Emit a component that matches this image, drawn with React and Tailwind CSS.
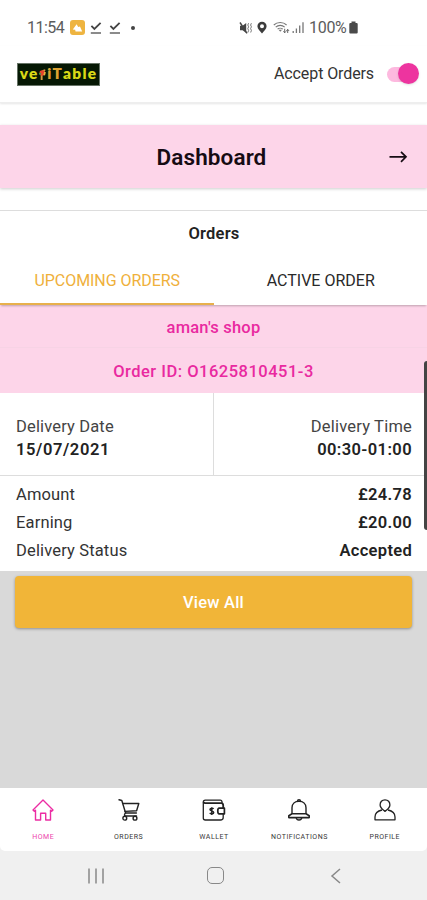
import React, { useState } from 'react'

const HomeIcon = () => (
  <svg width="24" height="24" viewBox="0 0 24 24" fill="none" stroke="currentColor" strokeWidth="1.4" strokeLinejoin="round">
    <path d="M12 2 L22 12 L20.7 13.3 L19.5 12.3 V22 H14.7 V15.2 H9.6 V22 H4.5 V12.3 L3.3 13.3 L2 12 Z" />
  </svg>
)

const CartIcon = () => (
  <svg width="24" height="24" viewBox="0 0 24 24" fill="none" stroke="currentColor" strokeWidth="1.4" strokeLinejoin="round" strokeLinecap="round">
    <path d="M2 1.8 L4.8 2.5 L8.6 15 H19.4" />
    <path d="M5.8 5.5 H21.8 L19.6 12.7 L8 13.4" />
    <path d="M8.6 15 C7.5 15.6 7 17.6 8.2 18 H19.5" />
    <circle cx="7.8" cy="20.2" r="1.9" />
    <circle cx="18" cy="20.2" r="1.9" />
  </svg>
)

const WalletIcon = () => (
  <svg width="24" height="24" viewBox="0 0 24 24" fill="none" stroke="currentColor" strokeWidth="1.3" strokeLinejoin="round">
    <path d="M20 5 V4 C20 2.8 19.3 2.2 18.3 2.2 H3.3 C1.8 2.2 1.3 3 1.3 4 V20 C1.3 21.3 2 22 3.3 22 H18.5 C20.3 22 21.2 21 21.2 19.5 V16" />
    <path d="M1.5 4.1 C1.8 5 2.4 5.2 3.3 5.2 H19 C20.5 5.2 21.2 6 21.2 7.5 V10" strokeWidth="1.8" />
    <path d="M22.4 10.2 H17.2 C15.3 10.2 15.3 15.8 17.2 15.8 H22.4 Z" strokeWidth="1.7" />
    <path d="M11.6 10.9 C10.8 9.8 8 9.9 8 11.5 C8 13.2 11.7 12.5 11.7 14.4 C11.7 16.2 8.6 16.1 7.8 14.9 M9.8 9.2 V17" strokeWidth="1.5" />
  </svg>
)

const BellIcon = () => (
  <svg width="24" height="24" viewBox="0 0 24 24" fill="none" stroke="currentColor" strokeWidth="1.4" strokeLinejoin="round">
    <path d="M5 15.8 V9.8 C5 5.7 8 3.2 12 3.2 C16 3.2 19 5.7 19 9.8 V15.8" />
    <path d="M10.5 3.2 C10.5 1.3 13.5 1.3 13.5 3.2" />
    <path d="M5 15.8 H19 L22.2 17.7 V19.6 H1.8 V17.7 Z" strokeWidth="1.6" />
    <path d="M9.3 20 C9.7 22.6 14.3 22.6 14.7 20" />
  </svg>
)

const ProfileIcon = () => (
  <svg width="24" height="24" viewBox="0 0 24 24" fill="none" stroke="currentColor" strokeWidth="1.3" strokeLinejoin="round">
    <path d="M12 1.8 C8.9 1.8 7.1 4 7.1 7 C7.1 9.8 9.5 11.3 12 13.4 C14.5 11.3 16.9 9.8 16.9 7 C16.9 4 15.1 1.8 12 1.8 Z" />
    <path d="M9 12 C4.4 13 2 15.5 2 19 V21.8 H22 V19 C22 15.5 19.6 13 15 12" />
  </svg>
)

const CheckIcon = () => (
  <svg width="14" height="14" viewBox="0 0 14 14" fill="none" stroke="#444" strokeWidth="1.8">
    <path d="M2.4 4.9 L5.4 7.9 L11.6 1.9" />
    <path d="M1.8 12 H12" stroke="#777" strokeWidth="1.7" />
  </svg>
)

const MuteIcon = () => (
  <svg width="14" height="14" viewBox="0 0 14 14" fill="none" stroke="#444" strokeWidth="1.4">
    <path d="M1 4.8 H3.6 L7.2 2 V12 L3.6 9.2 H1 Z" fill="#444" stroke="none" />
    <path d="M1 1.5 L8 12.3" />
    <path d="M9.6 2.2 L8.8 4 L9.6 5.8 L8.8 7.6 L9.6 9.4 L8.9 11.5 M12.4 2.2 L11.6 4 L12.4 5.8 L11.6 7.6 L12.4 9.4 L11.7 11.5" stroke="#666" strokeWidth="0.9" />
  </svg>
)

const PinIcon = () => (
  <svg width="10" height="13" viewBox="0 0 10 13">
    <path fillRule="evenodd" fill="#3c3c3c" d="M5 0.7 A4.6 4.6 0 0 1 9.6 5.3 C9.6 8 6.8 10.5 5 12.4 C3.2 10.5 0.4 8 0.4 5.3 A4.6 4.6 0 0 1 5 0.7 Z M5 3.2 A2 2 0 1 0 5 7.2 A2 2 0 1 0 5 3.2 Z" />
  </svg>
)

const WifiIcon = () => (
  <svg width="17" height="14" viewBox="0 0 17 14" fill="none" stroke="#777" strokeWidth="1.1">
    <path d="M0.8 4 C4.2 0.6 10.2 0.6 13.6 4 M2.7 6.1 C5.2 3.8 9.2 3.8 11.7 6.1 M4.6 8.2 C6 6.9 8.4 6.9 9.8 8.2" />
    <path d="M5.5 8.7 H9 L7.3 10.7 Z" fill="#777" stroke="none" />
    <path d="M11.7 7.8 V11.5 M10.4 10.3 L11.7 11.8 L13 10.3 M14.7 12 V8.5 M13.4 9.9 L14.7 8.4 L16 9.9" stroke="#555" strokeWidth="0.9" />
  </svg>
)

const SignalIcon = () => (
  <svg width="13" height="13" viewBox="0 0 13 13" stroke="#777" strokeWidth="1.3">
    <path d="M1.2 12 V10 M4.4 12 V7.5 M7.7 12 V4.5 M11 12 V1.2" />
  </svg>
)

const navItems = [
  { label: 'HOME', icon: HomeIcon },
  { label: 'ORDERS', icon: CartIcon },
  { label: 'WALLET', icon: WalletIcon },
  { label: 'NOTIFICATIONS', icon: BellIcon },
  { label: 'PROFILE', icon: ProfileIcon }
]

const details = [
  { label: 'Amount', value: '£24.78' },
  { label: 'Earning', value: '£20.00' },
  { label: 'Delivery Status', value: 'Accepted' }
]

const StatusBar = () => (
  <div className="flex h-[46px] shrink-0 items-center justify-between pt-[9px] pr-[69px] pl-[27px] text-[#5c5c5c]">
    <div className="flex items-center">
      <span className="w-[37px] pt-px text-[16px] leading-5 tracking-[-0.55px]">11:54</span>
      <span className="ml-[6px] flex size-[15px] items-center justify-center rounded-[3px] bg-[#eeb440]">
        <svg width="11" height="10" viewBox="0 0 11 10" fill="#fff">
          <path d="M0.8 6.4 L4.6 1.2 L6.2 4 L8 3.6 L10.2 8.5 H3.5 L3.2 6.8 Z" />
        </svg>
      </span>
      <span className="ml-[4px]"><CheckIcon /></span>
      <span className="ml-[5px]"><CheckIcon /></span>
      <span className="ml-[9px] size-[4px] rounded-full bg-[#444]" />
    </div>
    <div className="flex items-center">
      <MuteIcon />
      <span className="ml-[4px]"><PinIcon /></span>
      <span className="ml-[6px]"><WifiIcon /></span>
      <span className="ml-[2px]"><SignalIcon /></span>
      <span className="ml-[4px] w-[40px] pt-px text-[16px] leading-5 whitespace-nowrap tracking-[-0.3px]">100%</span>
      <svg width="9" height="13" viewBox="0 0 9 13" fill="#4a4a4a">
        <path d="M2.5 0.5 H6.5 V2 H7.6 Q8.7 2 8.7 3.1 V11.5 Q8.7 12.6 7.6 12.6 H1.4 Q0.3 12.6 0.3 11.5 V3.1 Q0.3 2 1.4 2 H2.5 Z" />
      </svg>
    </div>
  </div>
)

const Logo = () => (
  <div className="flex h-[23px] w-[83px] items-center justify-center border border-[#667366] bg-[#061804] font-['Lato'] text-[14.5px] leading-none font-extrabold tracking-[1.2px] text-[#d9d916]">
    <span className="flex scale-x-[1.06] items-center">
      <span>ve</span>
      <svg width="8" height="14" viewBox="0 0 8 14" fill="none">
        <path d="M2.6 13 V6.5 Q3 3.5 6 3.2" stroke="#d79b43" strokeWidth="1.8" />
        <circle cx="3.2" cy="6" r="2.7" fill="#e2432c" />
        <path d="M0 6.8 H2" stroke="#37a04b" strokeWidth="1.5" />
        <path d="M5.8 5 L5 8.2" stroke="#e6b23e" strokeWidth="1.6" />
      </svg>
      <span className="text-[#dda332]">iT</span>
      <span>able</span>
    </span>
  </div>
)

const Header = ({ accepting, onToggle }) => (
  <header className="flex h-[57px] shrink-0 items-center justify-between border-b border-[#eee] pr-[8px] pl-[17px] shadow-[0_1px_2px_rgba(0,0,0,0.1)]">
    <Logo />
    <div className="flex items-center">
      <span className="text-[16px] tracking-[-0.1px] text-[#333]">Accept Orders</span>
      <button className="relative ml-[13px] h-[22px] w-[32px]" onClick={onToggle} aria-pressed={accepting}>
        <span className="absolute top-[4px] left-0 h-[15px] w-[29px] rounded-full bg-[#fdb9df]" />
        <span className={`absolute top-0 size-[21px] rounded-full shadow-sm ${accepting ? 'right-0 bg-[#ed349f]' : 'left-0 bg-white'}`} />
      </button>
    </div>
  </header>
)

const App = () => {
  const [tab, setTab] = useState('upcoming')
  const [accepting, setAccepting] = useState(true)

  const tabClass = (name) =>
    tab === name
      ? 'border-[#e8b04c] text-[#efb03b]'
      : 'border-transparent text-[#292929]'

  return (
    <div className="relative flex h-[900px] w-[427px] flex-col overflow-hidden bg-white font-['Roboto',sans-serif] text-[16px] text-[#222]">
      <StatusBar />
      <Header accepting={accepting} onToggle={() => setAccepting(!accepting)} />

      <button className="mt-[22px] flex h-[63px] shrink-0 items-center bg-[#fdd5e9] px-[16px] shadow-[0_1px_3px_rgba(0,0,0,0.2)]">
        <span className="w-[24px]" />
        <span className="flex-1 pt-[3px] text-center text-[22.5px] font-semibold tracking-[0.1px] text-[#160b13]">Dashboard</span>
        <svg className="mr-[3px] ml-[5px]" width="20" height="16" viewBox="0 0 20 16" fill="none" stroke="#170d14" strokeWidth="1.7">
          <path d="M1.5 7.8 H18 M13 2.8 L18 7.8 L13 12.8" />
        </svg>
      </button>

      <section className="mt-[22px] shrink-0 border-t border-[#ddd]">
        <h2 className="h-[46px] pt-px pl-px text-center text-[16.5px] leading-[44px] font-semibold tracking-[0.2px]">Orders</h2>
        <div className="relative flex h-[48px] shadow-[0_2px_2px_-1px_rgba(0,0,0,0.25)]">
          <button className={`flex-1 border-b-2 pt-[2px] pl-px tracking-[-0.05px] ${tabClass('upcoming')}`} onClick={() => setTab('upcoming')}>
            UPCOMING ORDERS
          </button>
          <button className={`flex-1 border-b-2 pt-[2px] pl-px ${tabClass('active')}`} onClick={() => setTab('active')}>
            ACTIVE ORDER
          </button>
        </div>
      </section>

      <section className="shrink-0 text-[16.5px]">
        <div className="bg-[#fdd5e9] text-center font-medium text-[#e929a0]">
          <p className="h-[43px] border-b border-[#f7d3e5] leading-[45px] tracking-[0.2px]">aman's shop</p>
          <p className="h-[45px] leading-[47px] tracking-[0.5px]">Order ID: O1625810451-3</p>
        </div>
        <div className="flex h-[83px] border-b border-[#ddd]">
          <div className="w-[214px] border-r border-[#ddd] pt-[22px] pl-[16px] leading-[23px]">
            <p className="tracking-[0.15px] text-[#444]">Delivery Date</p>
            <p className="font-semibold tracking-[0.6px]">15/07/2021</p>
          </div>
          <div className="flex-1 pt-[22px] pr-[15px] text-right leading-[23px]">
            <p className="tracking-[0.2px] text-[#444]">Delivery Time</p>
            <p className="font-semibold tracking-[0.4px]">00:30-01:00</p>
          </div>
        </div>
        <dl className="h-[95px] pt-[5px] pr-[15px] pl-[16px]">
          {details.map(item => (
            <div key={item.label} className="flex h-[28px] items-center justify-between">
              <dt className="tracking-[0.15px] text-[#333]">{item.label}</dt>
              <dd className="font-semibold tracking-[0.3px]">{item.value}</dd>
            </div>
          ))}
        </dl>
      </section>

      <div className="flex-1 bg-[#d9d9d9] px-[15px] pt-[5px]">
        <button className="h-[52px] w-full rounded-[4px] bg-[#f1b538] pt-[2px] text-[16.5px] font-medium tracking-[0.2px] text-white shadow-[0_1px_3px_rgba(0,0,0,0.35)]">
          View All
        </button>
      </div>

      <div className="shrink-0 bg-[#f0f0f0]">
        <nav className="grid h-[63px] grid-cols-5 rounded-b-[5px] bg-white pt-[10px] text-[#222]">
          {navItems.map((item, i) => {
            const Icon = item.icon
            return (
              <a key={item.label} className={`flex flex-col items-center pl-px ${i === 0 ? 'text-[#ec2ca3]' : ''}`}>
                <Icon />
                <span className="mt-[10px] text-[7px] leading-[10px] tracking-[0.5px] opacity-90">{item.label}</span>
              </a>
            )
          })}
        </nav>
        <div className="flex h-[49px] items-center justify-between pr-[85px] pl-[87px] text-[#888]">
          <svg width="18" height="18" viewBox="0 0 18 18" stroke="currentColor" strokeWidth="1.5">
            <path d="M2 1.5 V16.5 M9 1.5 V16.5 M16 1.5 V16.5" />
          </svg>
          <span className="mr-[4px] size-[17px] rounded-[5px] border-[1.5px] border-current" />
          <svg width="12" height="18" viewBox="0 0 12 18" fill="none" stroke="currentColor" strokeWidth="1.5">
            <path d="M10 2 L2 9 L10 16" />
          </svg>
        </div>
      </div>

      {/* Edge panel handle */}
      <div className="absolute top-[361px] right-0 h-[169px] w-[3px] rounded-l-[3px] bg-[#444]" />
    </div>
  )
}

export default App
